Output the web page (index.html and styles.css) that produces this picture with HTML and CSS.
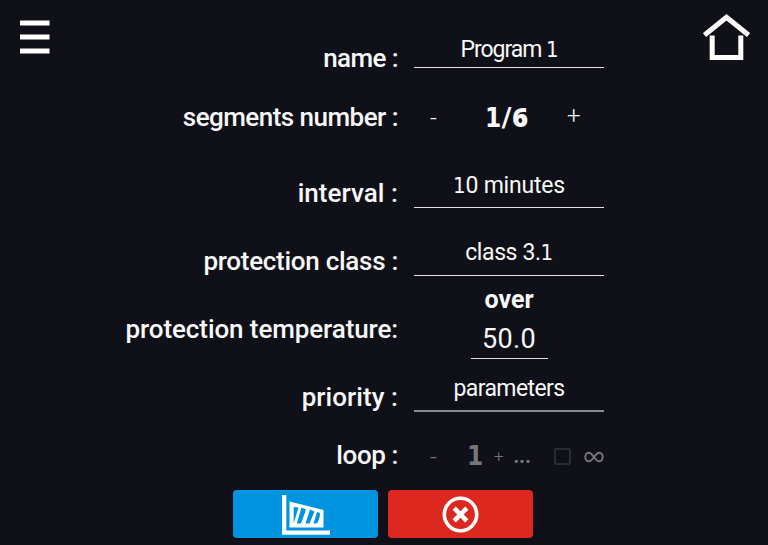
FILE: index.html
```html
<!DOCTYPE html>
<html lang="en">
<head>
<meta charset="utf-8">
<title>Program</title>
<link rel="stylesheet" href="styles.css">
</head>
<body>
<div class="screen">
  <header class="side">
    <svg class="menu" width="30" height="36" viewBox="0 0 30 36"><path d="M0 3H29.500M0 17H29.500M0 31H29.500" stroke="#fff" stroke-width="5"/></svg>
  </header>
  <main class="form">
    <div class="row r-name"><div class="label w-name">name :</div><div class="field"><span class="v-name">Program <b class="one">1</b></span></div></div>
    <div class="row r-seg"><div class="label w-seg">segments number :</div><div class="stepper"><span class="minus">-</span><span class="count"><b class="bold-one">1</b>/<b class="digit">6</b></span><span class="plus">+</span></div></div>
    <div class="row r-int"><div class="label w-int">interval :</div><div class="field"><span class="v-int"><b class="one">1</b>0 minutes</span></div></div>
    <div class="row r-class"><div class="label w-class">protection class :</div><div class="field"><span class="v-class">class 3.<b class="one">1</b></span></div></div>
    <div class="row r-temp"><div class="label w-temp">protection temperature:</div><div class="temp"><span class="over">over</span><span class="degrees">50.0</span></div></div>
    <div class="row r-prio"><div class="label w-prio">priority :</div><div class="field dim"><span class="v-prio">parameters</span></div></div>
    <div class="row r-loop"><div class="label w-loop">loop :</div><div class="loop"><span class="l-minus">-</span><span class="l-one"><b class="bold-one">1</b></span><span class="l-plus">+</span><span class="l-dots">...</span><i class="check"></i><svg class="inf" width="20" height="12" viewBox="0 0 20 12"><path d="M10 6C7.800 2.800 6.500 1.700 4.800 1.700C2.800 1.700 1.300 3.600 1.300 6S2.800 10.300 4.800 10.300C6.500 10.300 7.800 9.200 10 6C12.200 2.800 13.500 1.700 15.200 1.700C17.200 1.700 18.700 3.600 18.700 6S17.200 10.300 15.200 10.300C13.500 10.300 12.200 9.200 10 6Z" fill="none" stroke="#77777b" stroke-width="1.900"/></svg></div></div>
    <div class="actions">
      <div class="btn chart"><svg width="48" height="40" viewBox="0 0 48 40"><path d="M0 0H4.300V35.500H48V39.700H0Z" fill="#fff"/><path fill-rule="evenodd" fill="#fff" d="M7.500 6.500L41.500 15V32.500H7.500ZM11.700 12V28.500L16.500 12.500ZM19.500 12.500L14.800 28.500H19L24 14.500ZM28 14.500L23.500 28.500H27.500L32.500 16.500ZM35 17L31.500 28.500H34.500Q38 25 38 18Z"/></svg></div>
      <div class="btn cancel"><svg width="37" height="37" viewBox="0 0 37 37"><circle cx="18.500" cy="18.500" r="16.200" fill="none" stroke="#fff" stroke-width="3.600"/><path d="M12.200 12.200L24.800 24.800M24.800 12.200L12.200 24.800" stroke="#fff" stroke-width="4.600"/></svg></div>
    </div>
  </main>
  <nav class="side right">
    <svg class="home" width="47" height="47" viewBox="0 0 47 47"><path d="M1.500 21L23.500 3.300L45.500 21" fill="none" stroke="#fff" stroke-width="5"/><path d="M9.200 21.500V43.500H37.800V21.500" fill="none" stroke="#fff" stroke-width="5"/></svg>
  </nav>
</div>
</body>
</html>
```
FILE: styles.css
```css
* { box-sizing: border-box; }
body { margin: 0; background: #101118; color: #f8f8f8; font-family: Roboto, sans-serif; }
.screen { width: 768px; height: 545px; display: grid; grid-template-columns: 80px 1fr 80px; overflow: hidden; }
.side { padding: 20px 0 0 20px; }
.side.right { padding: 14px 0 0 15px; }
svg { display: block; flex: none; }
.form { padding-top: 18px; }
.row { display: grid; grid-template-columns: 318px 190px; column-gap: 16px; white-space: nowrap; }
.label { display: flex; justify-content: flex-end; font-size: 26px; line-height: 30px; font-weight: 500; }
.w-name { letter-spacing: -0.6px; }
.w-seg { letter-spacing: -0.53px; }
.w-class { letter-spacing: -0.28px; }
.w-temp { letter-spacing: -0.1px; }
.w-int, .w-prio { letter-spacing: 0.06px; }
.w-loop { letter-spacing: -0.4px; }
.r-name { height: 66px; }
.r-seg { height: 66px; }
.r-int, .r-class { height: 68px; }
.r-temp { height: 76px; }
.r-prio { height: 66px; }
.r-loop { height: 62px; }
.r-name .label { padding-top: 25px; }
.r-seg .label { padding-top: 18px; }
.r-int .label, .r-class .label, .r-temp .label { padding-top: 28px; }
.r-prio .label { padding-top: 20px; }
.r-loop .label { padding-top: 12px; }
.field { text-align: center; font-size: 23px; line-height: 28px; border-bottom: 1px solid #e2e2e4; }
.one { font: 400 22px/1 "DejaVu Sans Condensed", "DejaVu Sans", sans-serif; }
.v-name { letter-spacing: -1.05px; }
.v-int { letter-spacing: -0.2px; }
.v-class { letter-spacing: -0.4px; }
.v-prio { letter-spacing: -0.6px; }
.r-name .field { margin-top: 18px; height: 32px; }
.r-int .field { margin-top: 22px; height: 36px; }
.r-class .field { margin-top: 21px; height: 37px; }
.r-prio .field { margin-top: 13px; height: 37px; border-bottom: 2px solid #8a8b8e; }
.stepper, .loop { display: flex; }
.stepper { padding-top: 18px; line-height: 30px; }
.minus { width: 71px; padding-left: 16px; font-size: 24px; line-height: 33px; font-weight: 300; }
.count { width: 82px; padding-top: 1px; font-size: 27px; font-weight: 700; letter-spacing: 0.5px; }
.bold-one { font: 700 26px/1 "DejaVu Sans Condensed", "DejaVu Sans", sans-serif; }
.digit { font-family: "Noto Sans", sans-serif; font-size: 27px; line-height: 1; }
.plus { font-size: 24px; font-weight: 300; line-height: 28px; }
.temp { display: flex; flex-direction: column; align-items: center; }
.over { font-size: 25px; font-weight: 700; line-height: 28px; }
.degrees { width: 77px; height: 45px; padding-top: 9px; text-align: center; font-size: 27px; line-height: 32px; letter-spacing: 0.3px; border-bottom: 1px solid #e2e2e4; }
.loop { color: #77777b; padding-top: 12px; line-height: 30px; }
.l-minus { width: 53px; padding-left: 16px; font-size: 24px; line-height: 34px; font-weight: 300; }
.l-one { width: 27px; padding-top: 3px; }
.l-plus { width: 19px; padding-top: 1px; font-size: 17px; line-height: 31px; font-weight: 300; }
.l-dots { width: 41px; font-size: 24px; line-height: 31px; font-weight: 500; letter-spacing: -0.8px; }
.check { width: 17px; height: 17px; margin-top: 8px; border: 2px solid #2b2c32; border-radius: 2px; }
.inf { margin: 11px 0 0 13px; }
.actions { display: flex; gap: 10px; padding-left: 153.400px; }
.btn { width: 145px; height: 48px; border-radius: 4px; display: flex; align-items: center; justify-content: center; }
.chart { background: #0094e0; }
.chart svg { margin: 2px 0 0 0; }
.cancel { background: #dc281e; }
```
